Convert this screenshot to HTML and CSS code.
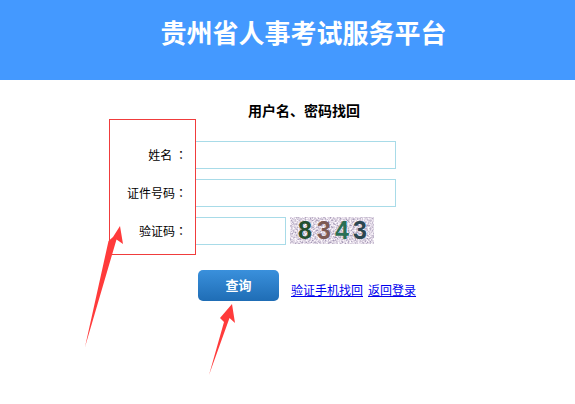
FILE: index.html
```html
<!DOCTYPE html>
<html lang="zh-CN">
<head>
    <meta charset="UTF-8">
    <meta name="viewport" content="width=device-width, initial-scale=1.0">
    <title>贵州省人事考试服务平台</title>
    <link rel="stylesheet" href="styles.css">
</head>
<body>
    <div class="header">
        <h1>贵州省人事考试服务平台</h1>
    </div>
    <div class="content">
        <h3 class="sub-title">用户名、密码找回</h3>
        <form class="find-form">
            <div class="row">
                <label for="name">姓名 <span class="colon" lang="zh-TW">：</span></label>
                <input type="text" id="name">
            </div>
            <div class="row">
                <label for="card">证件号码<span class="colon" lang="zh-TW">：</span></label>
                <input type="text" id="card">
            </div>
            <div class="row">
                <label for="code">验证码<span class="colon" lang="zh-TW">：</span></label>
                <input type="text" id="code" class="code-input">
                <svg class="captcha" width="84" height="27" viewBox="0 0 84 27">
                    <defs>
                        <filter id="noise" x="0" y="0" width="100%" height="100%">
                            <feTurbulence type="fractalNoise" baseFrequency="0.6" numOctaves="2" seed="7"/>
                            <feColorMatrix type="matrix" values="1.3 0 0 0 0.08  1.3 0 0 0 0.02  1.1 0 0 0 0.22  0 0 0 0 1"/>
                        </filter>
                    </defs>
                    <rect width="84" height="27" filter="url(#noise)"/>
                    <text x="8" y="22" class="digit" fill="#24502f">8</text>
                    <text x="27" y="22" class="digit" fill="#7d5a54">3</text>
                    <text x="45" y="22" class="digit" fill="#2a6f55">4</text>
                    <text x="63" y="22" class="digit" fill="#2b4650">3</text>
                </svg>
            </div>
            <div class="actions">
                <button type="button" class="query-btn">查询</button>
                <div class="links">
                    <a href="#">验证手机找回</a>
                    <a href="#">返回登录</a>
                </div>
            </div>
        </form>
    </div>

    <!-- red marks drawn on top of the screenshot -->
    <div class="mark-box"></div>
    <svg class="mark-arrows" width="575" height="404" viewBox="0 0 575 404">
        <path d="M120 226 L123 244 L116.500 239.500 L85 347 L108.500 241 L113 237 Z" fill="#ff3b3b"/>
        <path d="M232 304 L235 323 L229.500 318 L209 375 L224 322 L220 318 Z" fill="#ff3b3b"/>
    </svg>
</body>
</html>
```

FILE: styles.css
```css
body {
    margin: 0;
    font-family: "Noto Sans CJK SC", "Liberation Sans", sans-serif;
    background-color: #fff;
    color: #000;
    position: relative;
    height: 404px;
    overflow: hidden;
}
.header {
    height: 80px;
    background-color: #4499ff;
    display: flex;
    justify-content: center;
    align-items: flex-start;
}
.header h1 {
    margin: 13px 0 0 32px;
    font-size: 26px;
    line-height: 38px;
    font-weight: bold;
    color: #fff;
}
.content {
    padding-top: 20px;
}
.sub-title {
    margin: 0 0 21px 248px;
    font-size: 14px;
    line-height: 20px;
    font-weight: bold;
}
.find-form {
    display: flex;
    flex-direction: column;
    gap: 10px;
}
.row {
    display: flex;
    align-items: flex-start;
    height: 28px;
}
.row label {
    width: 187px;
    margin-right: 8px;
    text-align: right;
    font-size: 12px;
    line-height: 28px;
}
.colon {
    font-family: "Noto Sans CJK TC", sans-serif;
}
.row input {
    width: 201px;
    height: 28px;
    box-sizing: border-box;
    border: 1px solid #a8dbe8;
    padding: 0 4px;
    margin: 0;
    outline: none;
}
.row input.code-input {
    width: 91px;
}
.captcha {
    margin-left: 4px;
    display: block;
}
.digit {
    font-family: "Liberation Sans", sans-serif;
    font-size: 25px;
    font-weight: bold;
}
.actions {
    display: flex;
    align-items: flex-start;
    margin: 15px 0 0 198px;
}
.query-btn {
    width: 81px;
    height: 31px;
    border: none;
    border-radius: 5px;
    background: linear-gradient(#3a90dc, #1f6db5);
    color: #fff;
    font-family: inherit;
    font-size: 13px;
    font-weight: bold;
    padding: 0 0 3px 0;
    cursor: pointer;
}
.links {
    margin: 11px 0 0 12px;
    font-size: 12px;
    line-height: 18px;
    display: flex;
    gap: 5px;
}
.links a {
    color: #0000ee;
}
.mark-box {
    position: absolute;
    left: 109px;
    top: 119px;
    width: 85px;
    height: 134px;
    border: 1px solid #f03c3c;
}
.mark-arrows {
    position: absolute;
    left: 0;
    top: 0;
    pointer-events: none;
}
```
